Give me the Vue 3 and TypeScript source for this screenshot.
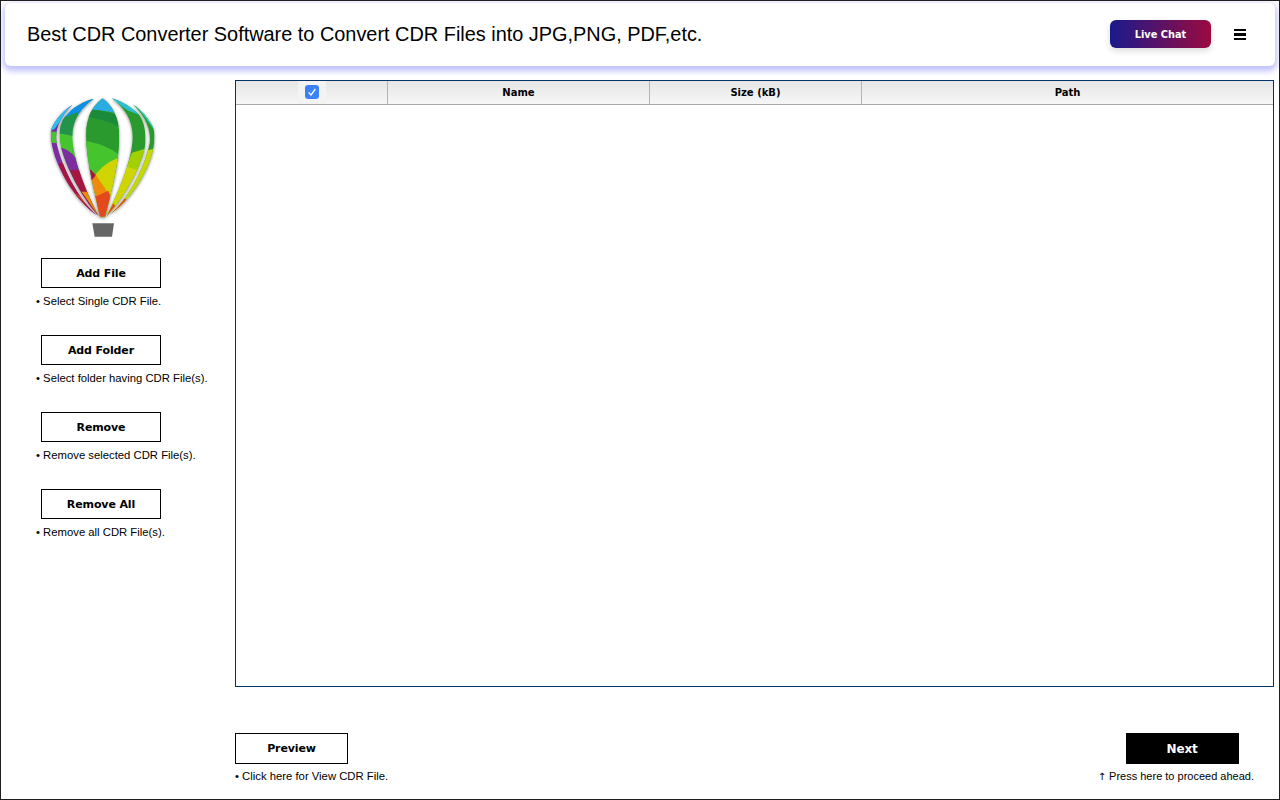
<template>
  <div class="window">
    <header class="topbar">
      <h1 class="title">Best CDR Converter Software to Convert CDR Files into JPG,PNG, PDF,etc.</h1>
      <div class="topbar-actions">
        <button class="chat-btn">Live Chat</button>
        <button class="menu-btn" aria-label="Menu"><span></span><span></span><span></span></button>
      </div>
    </header>

    <main class="body">
      <aside class="sidebar">
        <svg class="logo" viewBox="120 270 375 465" width="125" height="155">
          <defs>
            <clipPath id="gore-center"><path d="M308 295C280 315 258 350 258 405C258 480 285 580 300 650H316C332 580 358 490 358 410C358 350 335 315 308 295Z" /></clipPath>
            <clipPath id="gore-left"><path d="M282 296C250 303 218 322 195 350C180 370 176 395 180 425C190 490 245 590 296 648C265 590 217 480 217 405C217 360 245 320 282 296Z" /></clipPath>
            <clipPath id="gore-far-left"><path d="M218 314C190 330 165 360 155 385C150 410 155 440 165 470C190 540 240 610 290 645C235 600 185 500 170 430C162 385 185 345 218 314Z" /></clipPath>
            <clipPath id="gore-right"><path d="M335 295C365 303 400 325 418 345C432 365 438 395 436 430C430 490 375 590 320 648C350 590 398 480 398 410C398 360 372 320 335 295Z" /></clipPath>
            <clipPath id="gore-far-right"><path d="M398 313C425 330 450 360 460 385C467 410 462 445 452 475C430 540 380 610 328 645C385 600 435 500 449 430C455 385 432 345 398 313Z" /></clipPath>
            <filter id="soft" x="-15%" y="-15%" width="130%" height="130%">
              <feDropShadow dx="0" dy="3" stdDeviation="5" flood-color="#000" flood-opacity="0.5" />
            </filter>
            <filter id="blur-edge" x="-15%" y="-15%" width="130%" height="140%">
              <feGaussianBlur stdDeviation="1.5" />
            </filter>
          </defs>
          <g filter="url(#soft)">
            <g clip-path="url(#gore-center)">
              <rect x="250" y="290" width="115" height="365" fill="#2a9a2f" />
              <path d="M250 290H365V345C340 335 300 328 250 330Z" fill="#29abe2" />
              <path d="M250 328C300 328 340 340 365 352V384C340 370 300 355 250 348Z" fill="#1f8a3a" />
              <path d="M250 422C295 428 335 445 365 470V660H250Z" fill="#44c42f" />
              <path d="M365 470C330 480 305 500 285 525L330 592L365 570Z" fill="#d0d400" />
              <path d="M262 500L288 525L272 548Z" fill="#a6123f" />
              <path d="M270 548L288 525L332 590L312 660H290Z" fill="#f08a0c" />
              <path d="M285 590L325 572L332 590L312 660H290Z" fill="#e34a1c" />
            </g>
            <g clip-path="url(#gore-left)">
              <rect x="170" y="290" width="130" height="365" fill="#44c42f" />
              <path d="M170 290H290L240 345L170 372Z" fill="#0f8fe8" />
              <path d="M170 372L180 358L235 335L225 410C205 405 190 402 170 400Z" fill="#22934a" />
              <path d="M170 438C195 445 215 455 228 475L250 560L300 650H250Z" fill="#7b2e9e" />
              <path d="M210 510L245 510L270 590L300 655H270Z" fill="#a6123f" />
              <path d="M245 575L265 575L300 655Z" fill="#f08a0c" />
            </g>
            <g clip-path="url(#gore-far-left)">
              <rect x="145" y="305" width="150" height="345" fill="#7b2e9e" />
              <path d="M145 305H225L165 385L145 398Z" fill="#29c1ea" />
              <path d="M145 395L175 395L175 430L145 428Z" fill="#44c42f" />
              <path d="M175 490L200 490L295 650H240Z" fill="#a6123f" />
              <path d="M225 580L260 600L295 650Z" fill="#e34a1c" />
            </g>
            <g clip-path="url(#gore-right)">
              <rect x="315" y="290" width="125" height="365" fill="#2a9a2f" />
              <path d="M325 290H440V352L385 332Z" fill="#2cbfd4" />
              <path d="M396 458L440 445V500L340 655H315Z" fill="#a3d000" />
              <path d="M380 500L412 510L340 655H315Z" fill="#d0d400" />
              <path d="M340 610L350 625L322 655H315Z" fill="#e34a1c" />
            </g>
            <g clip-path="url(#gore-far-right)">
              <rect x="325" y="305" width="145" height="345" fill="#2a9a2f" />
              <path d="M395 305H470V400L430 345Z" fill="#2cd0cc" />
              <path d="M445 450L470 445V520L330 650Z" fill="#c9d800" />
              <path d="M370 595L385 600L325 650Z" fill="#e34a1c" />
            </g>
          </g>
          <path d="M277 670H342L336 710H284Z" fill="#666" filter="url(#blur-edge)" />
        </svg>

        <div v-for="item in actions" :key="item.label" class="action">
          <button class="btn">{{ item.label }}</button>
          <p class="hint">• {{ item.hint }}</p>
        </div>
      </aside>

      <section class="content">
        <div class="grid">
          <div class="grid-head">
            <div class="cell cell-check">
              <span class="check-wrap">
                <span class="checkbox">
                  <svg viewBox="0 0 14 14" width="14" height="14"><path d="M3.6 7.4L6 10L10.4 4" fill="none" stroke="#fff" stroke-width="1.3" /></svg>
                </span>
              </span>
            </div>
            <div class="cell">Name</div>
            <div class="cell">Size (kB)</div>
            <div class="cell">Path</div>
          </div>
        </div>

        <footer class="footer">
          <div class="foot-left">
            <button class="btn btn-wide">Preview</button>
            <p class="hint">• Click here for View CDR File.</p>
          </div>
          <div class="foot-right">
            <button class="btn btn-wide btn-dark">Next</button>
            <p class="hint"><span class="arrow">↑</span> Press here to proceed ahead.</p>
          </div>
        </footer>
      </section>
    </main>
  </div>
</template>

<script setup lang="ts">
interface Action {
  label: string
  hint: string
}

const actions: Action[] = [
  { label: 'Add File', hint: 'Select Single CDR File.' },
  { label: 'Add Folder', hint: 'Select folder having CDR File(s).' },
  { label: 'Remove', hint: 'Remove selected CDR File(s).' },
  { label: 'Remove All', hint: 'Remove all CDR File(s).' }
]
</script>

<style>
html,
body {
  margin: 0;
  background: #fff;
}
</style>

<style scoped>
.window {
  box-sizing: border-box;
  width: 1280px;
  height: 800px;
  border: 1px solid #1e1e1e;
  background: #fff;
  font-family: "Liberation Sans", Arial, sans-serif;
  color: #000;
  display: flex;
  flex-direction: column;
  overflow: hidden;
}

/* === Top bar === */
.topbar {
  height: 63px;
  margin: 2px 4px 0;
  padding: 0 29px 0 22px;
  flex: none;
  display: flex;
  align-items: center;
  justify-content: space-between;
  background: #fff;
  border-radius: 6px;
  box-shadow: 0 3px 6px 2px #c0c0fb;
}

.title {
  margin: 0;
  font-size: 19.9px;
  font-weight: 400;
}

.topbar-actions {
  display: flex;
  align-items: center;
  gap: 23px;
}

.chat-btn {
  width: 101px;
  height: 28px;
  margin-top: -1px;
  padding: 0;
  border: 0;
  border-radius: 6px;
  background: linear-gradient(90deg, #1a1a8c, #9b0a3f);
  box-shadow: 0 3px 6px rgba(0, 0, 0, 0.14);
  color: #fff;
  font: 700 9.8px "DejaVu Sans", Verdana, sans-serif;
}

.menu-btn {
  width: 12px;
  padding: 0;
  border: 0;
  background: none;
  display: flex;
  flex-direction: column;
  gap: 2px;
}

.menu-btn span {
  height: 2.5px;
  background: #000;
}

/* === Body === */
.body {
  flex: 1;
  display: flex;
  min-height: 0;
}

.sidebar {
  width: 234px;
  flex: none;
  padding: 24px 0 0 40px;
  box-sizing: border-box;
}

.logo {
  display: block;
  margin: 0 0 13px -1px;
}

.action {
  margin-bottom: 26px;
}

.btn {
  display: block;
  box-sizing: border-box;
  width: 120px;
  height: 30px;
  padding: 1px 0 0;
  border: 1px solid #000;
  background: #fff;
  color: #000;
  font: 700 11px "DejaVu Sans", Verdana, sans-serif;
  letter-spacing: -0.12px;
}

.hint {
  margin: 5px 0 0 -5px;
  font-size: 11.3px;
  line-height: 16px;
  white-space: nowrap;
}

.arrow {
  font-family: "DejaVu Sans", sans-serif;
  font-size: 10px;
}

/* === Content === */
.content {
  flex: 1;
  padding: 14px 5px 0 0;
  display: flex;
  flex-direction: column;
}

.grid {
  box-sizing: border-box;
  height: 607px;
  border: 1px solid #003366;
  flex: none;
}

.grid-head {
  display: grid;
  grid-template-columns: 152px 262px 212px 1fr;
  height: 24px;
  border-bottom: 1px solid #aaa;
  background: linear-gradient(#e6e6e6, #f6f6f6);
  box-sizing: border-box;
}

.cell {
  display: flex;
  align-items: center;
  justify-content: center;
  border-right: 1px solid #b4b4b4;
  font: 700 10px "DejaVu Sans", Verdana, sans-serif;
}

.cell:last-child {
  border-right: 0;
}

.check-wrap {
  width: 28px;
  height: 23px;
  display: flex;
  align-items: center;
  justify-content: center;
  background: #f3f3f3;
}

.checkbox {
  width: 14px;
  height: 14px;
  margin-top: -1px;
  border-radius: 3px;
  background: #3b82f6;
  display: block;
}

.checkbox svg {
  display: block;
}

.footer {
  margin-top: 46px;
  padding-right: 20px;
  display: flex;
  justify-content: space-between;
}

.btn-wide {
  width: 113px;
  height: 31px;
  padding-top: 0;
}

.foot-left .hint,
.foot-right .hint {
  margin-left: 0;
  margin-top: 4px;
}

.foot-right .hint {
  font-size: 11px;
}

.foot-right .btn {
  margin-left: 28px;
  font-size: 12px;
}

.btn-dark {
  background: #000;
  color: #fff;
}
</style>
